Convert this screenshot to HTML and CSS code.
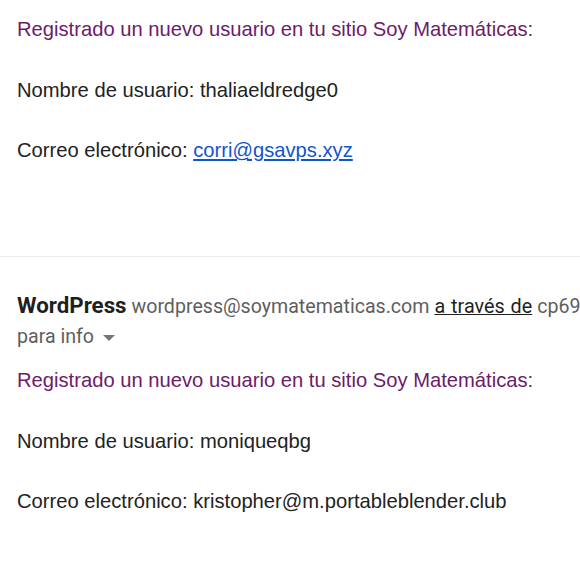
FILE: index.html
```html
<!DOCTYPE html>
<html lang="es">
  <head>
    <meta charset="UTF-8" />
    <title>Registro de usuarios</title>
    <link rel="stylesheet" href="styles.css">
  </head>
  <body>
    <div class="message">
      <p class="line intro">Registrado un nuevo usuario en tu sitio Soy Matemáticas:</p>
      <p class="line">Nombre de usuario: thaliaeldredge0</p>
      <p class="line">Correo electrónico: <a href="#" class="mail">corri@gsavps.xyz</a></p>
    </div>

    <div class="message second">
      <div class="sender">
        <span class="name">WordPress</span>
        <span class="address">wordpress@soymatematicas.com</span>
        <span class="via">a través de</span>
        <span class="address">cp69</span>
      </div>
      <div class="to">
        para info <span class="caret"></span>
      </div>
      <p class="line intro">Registrado un nuevo usuario en tu sitio Soy Matemáticas:</p>
      <p class="line">Nombre de usuario: moniqueqbg</p>
      <p class="line">Correo electrónico: kristopher@m.portableblender.club</p>
    </div>
  </body>
</html>
```

FILE: styles.css
```css
body {
  margin: 0;
  background-color: white;
  font-family: "Liberation Sans", Arial, sans-serif;
  color: #222;
  overflow: hidden;
}
.message {
  padding: 17px 0 0 17px;
  height: 239px;
  border-bottom: 1px solid #ebebeb;
}
.message.second {
  padding-top: 35px;
  border-bottom: none;
}
.line {
  margin: 0 0 36.5px;
  font-size: 20.2px;
  line-height: 24px;
  white-space: nowrap;
}
.intro {
  color: #6d1b6b;
}
.mail {
  color: #1155cc;
}
.sender {
  font-family: Roboto, sans-serif;
  white-space: nowrap;
  line-height: 26px;
  word-spacing: 1px;
}
.name {
  font-size: 22.3px;
  font-weight: bold;
  color: #1f1f1f;
}
.address {
  font-size: 19.6px;
  color: #5e5e5e;
}
.via {
  font-size: 19.8px;
  color: #1f1f1f;
  text-decoration: underline;
}
.to {
  font-family: Roboto, sans-serif;
  font-size: 19.6px;
  color: #5e5e5e;
  line-height: 26px;
  margin: 3px 0 18px;
}
.caret {
  display: inline-block;
  width: 0;
  height: 0;
  margin-left: 4px;
  vertical-align: middle;
  border-left: 6px solid transparent;
  border-right: 6px solid transparent;
  border-top: 6px solid #777;
}
```
